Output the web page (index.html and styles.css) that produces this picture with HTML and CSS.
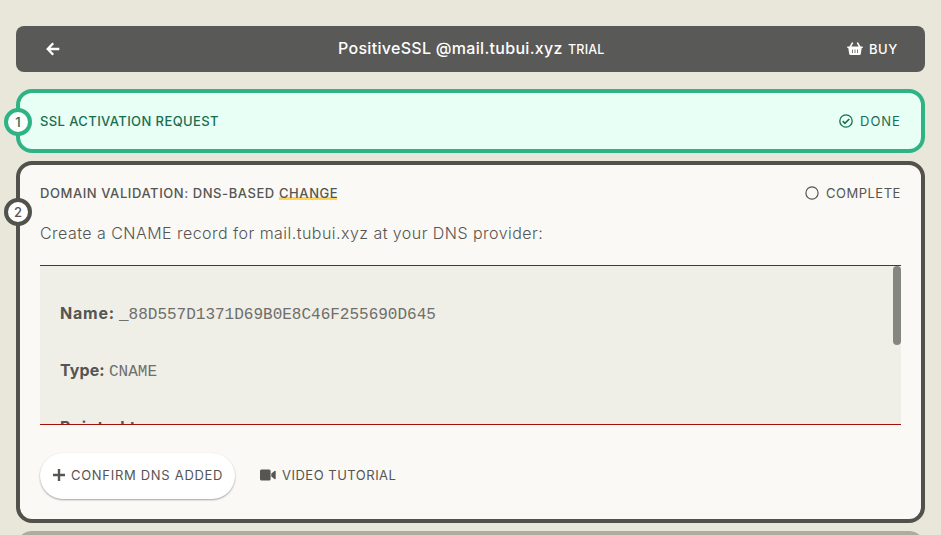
FILE: index.html
```html
<!DOCTYPE html>
<html lang="en">
<head>
<meta charset="utf-8">
<title>PositiveSSL</title>
<link rel="stylesheet" href="styles.css">
</head>
<body>
<header class="topbar">
  <a class="back" aria-label="Back"><svg width="14" height="14" viewBox="0 0 14 14" fill="none" stroke="currentColor" stroke-width="2.3"><path d="M7.2 1.2 1.7 7l5.500 5.800M2 7h11.300"/></svg></a>
  <h1 class="title"><span class="product">PositiveSSL @mail.tubui.xyz</span><span class="trial">TRIAL</span></h1>
  <a class="buy"><svg width="16" height="14" viewBox="0 0 16 14"><path fill="currentColor" fill-rule="evenodd" d="M4.800.5a.8.8 0 0 1 1.300.9L4.300 4.500h7.400L9.900 1.400a.8.8 0 0 1 1.300-.9l2.300 4h1.700q.7 0 .7.700t-.7.800h-.5l-.9 6.100q-.2 1-1.200 1H3.400q-1 0-1.200-1L1.300 6H.8Q.1 6 .1 5.200t.7-.7h1.700zM5 7.500v3.500h.8V7.500zm2.600 0v3.500h.8V7.500zm2.600 0v3.500h.8V7.500z"/></svg><span class="t-buy">BUY</span></a>
</header>

<section class="card card-done">
  <span class="step step-done">1</span>
  <div class="row">
    <h2 class="heading t-ssl">SSL ACTIVATION REQUEST</h2>
    <span class="status"><svg width="14" height="14" viewBox="0 0 14 14" fill="none" stroke="currentColor" stroke-width="1.300"><circle cx="7" cy="7" r="6.200"/><path stroke-width="1.600" d="m3.700 7.200 2.200 2.100 4.400-4.300"/></svg><span class="t-done">DONE</span></span>
  </div>
</section>

<section class="card card-active">
  <span class="step step-active">2</span>
  <div class="row">
    <h2 class="heading"><span class="t-domain">DOMAIN VALIDATION: DNS-BASED</span><a class="change">CHANGE</a></h2>
    <span class="status"><svg width="14" height="14" viewBox="0 0 14 14" fill="none" stroke="currentColor" stroke-width="1.200"><circle cx="7" cy="7" r="6.100"/></svg><span class="t-complete">COMPLETE</span></span>
  </div>
  <p class="intro"><span class="t-intro">Create a CNAME record for mail.tubui.xyz at your DNS provider:</span></p>
  <div class="record">
    <div class="fields">
      <p class="field"><b class="t-name">Name:</b><code>_88D557D1371D69B0E8C46F255690D645</code></p>
      <p class="field"><b class="t-type">Type:</b><code>CNAME</code></p>
      <p class="field"><b class="t-point">Pointed to</b></p>
    </div>
    <div class="thumb"></div>
  </div>
  <div class="actions">
    <button class="confirm"><svg width="12" height="12" viewBox="0 0 12 12" stroke="currentColor" stroke-width="2.400"><path d="M6 0v12M0 6h12"/></svg><span class="t-confirm">CONFIRM DNS ADDED</span></button>
    <a class="video"><svg width="16" height="12" viewBox="0 0 16 12" fill="currentColor"><rect y=".5" width="10.600" height="11" rx="1.500"/><path d="m11.300 4.400 3.200-2.500q1.200-.7 1.200.5v7.200q0 1.200-1.200.5l-3.200-2.500z"/></svg><span class="t-video">VIDEO TUTORIAL</span></a>
  </div>
</section>

<section class="card card-next"></section>
</body>
</html>
```
FILE: styles.css
```css
* { box-sizing: border-box; }
html { overflow: hidden; }
body {
  display: flex;
  flex-direction: column;
  margin: 0;
  height: 535px;
  padding: 26px 16px 0;
  overflow: hidden;
  background: #e9e7da;
  color: #555552;
  font-family: Inter, sans-serif;
  font-size: 13px;
  line-height: 20px;
}
h1, h2, p { margin: 0; font-weight: 500; }
svg { display: block; flex: none; }
span, b, a { white-space: nowrap; }

.topbar {
  display: grid;
  flex: none;
  grid-template-columns: 1fr auto 1fr;
  align-items: center;
  height: 46px;
  padding: 0 27.500px 0 29.500px;
  border-radius: 8px;
  background: #595957;
  color: #fff;
}
.title { display: flex; align-items: baseline; }
.product { width: 230px; font-size: 16px; }
.trial { width: 37px; font-size: 12.500px; letter-spacing: .2px; }
.buy { display: flex; align-items: center; justify-self: end; gap: 6px; font-weight: 500; }

.card { position: relative; flex: none; padding: 0 20px; border: 4px solid; border-radius: 16px; }
.card-done { height: 64px; margin-top: 17px; padding-top: 18px; border-color: #2fb385; background: #e7fff4; color: #176e52; }
.card-active { height: 362px; margin-top: 8px; padding-top: 18px; border-color: #50524b; background: #faf9f5; }
.card-next { height: 64px; margin-top: 8px; border-color: #aeaba0; background: #aeaba0; }

.step {
  position: absolute;
  left: -16px;
  width: 28px;
  height: 28px;
  border: 4px solid;
  border-radius: 50%;
  background: #fff;
  text-align: center;
  font-weight: 500;
}
.step-done { top: 15px; border-color: #2fb385; }
.step-active { top: 33px; border-color: #50524b; }

.row { display: flex; align-items: center; justify-content: space-between; height: 20px; }
.heading { display: flex; font-size: 13px; font-weight: 550; line-height: 20px; }
.status { display: flex; align-items: center; gap: 7px; }
.change { height: 18px; background: linear-gradient(#ffd552, #ffd552) 0 14px / 100% 3px no-repeat; }

.intro { height: 24px; margin-top: 18px; font-size: 16px; font-weight: 300; line-height: 24px; }
.intro span { display: block; }
.record {
  display: flex;
  justify-content: space-between;
  height: 160px;
  margin-top: 20px;
  border-top: 1px solid #a51008;
  border-bottom: 1px solid #a51008;
  background: #f0efe7;
  overflow: hidden;
}
.fields { padding: 35px 0 0 20px; }
.field { display: flex; align-items: baseline; height: 24px; margin-bottom: 33px; font-size: 16px; line-height: 24px; }
.field b { font-weight: 700; }
code { color: #6e6e6a; font: 16px/24px "Liberation Mono", monospace; }
.thumb { width: 8px; height: 79px; border-radius: 4px; background: #85867f; }

.actions { display: flex; gap: 25px; height: 46px; margin-top: 28px; }
.confirm {
  display: flex;
  align-items: center;
  gap: 6px;
  width: 195px;
  padding: 0 0 2px 13px;
  border: 0;
  border-radius: 23px;
  background: #fff;
  box-shadow: 0 1px 2px rgba(0, 0, 0, .35);
  color: inherit;
  font: inherit;
}
.video { display: flex; align-items: center; gap: 6px; padding-bottom: 2px; }

.product { letter-spacing: .3px; }
.t-ssl { letter-spacing: .4px; }
.t-domain, .change { letter-spacing: .57px; }
.t-complete, .t-buy, .t-video { letter-spacing: .5px; }
.t-done { letter-spacing: 1px; }
.t-confirm { letter-spacing: .7px; }
.t-intro { letter-spacing: .46px; }
.t-domain { width: 239px; }
.change { width: 58px; }
.t-buy { width: 28.500px; }
.t-done { width: 41px; }
.t-complete { width: 75px; }
.t-name { width: 59px; letter-spacing: .8px; }
.t-type { width: 49px; letter-spacing: .1px; }
.t-point { letter-spacing: .8px; }
```
